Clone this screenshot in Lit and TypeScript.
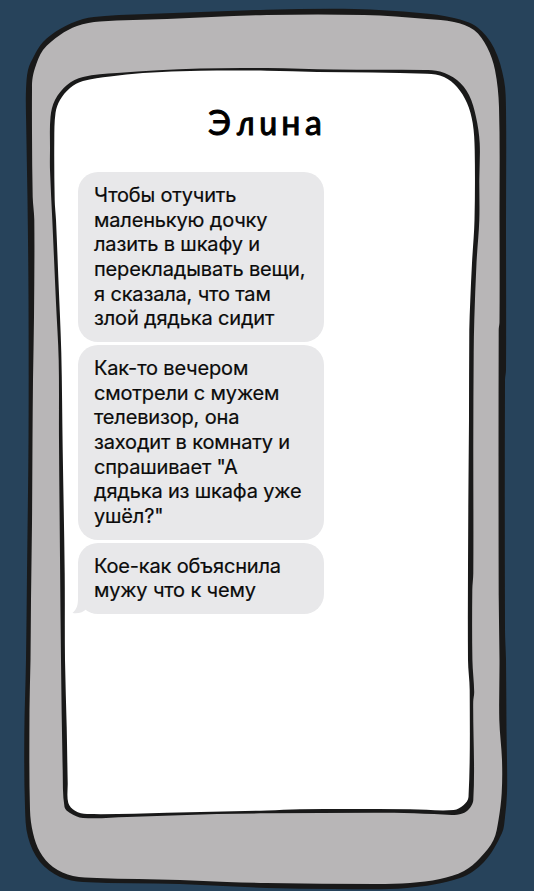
import { LitElement, html, css, svg } from "lit";
import { customElement, property } from "lit/decorators.js";

type Point = [number, number];

/** Turns "x,y x,y …" into points. */
const parse = (s: string): Point[] =>
  s.trim().split(/\s+/).map((p) => p.split(",").map(Number) as Point);

/** Closed smooth curve through the points, as cubic Béziers. */
function smooth(source: string): string {
  const p = parse(source);
  const n = p.length;
  const dist = (a: Point, b: Point) => Math.hypot(a[0] - b[0], a[1] - b[1]) || 1;
  let d = `M${p[0][0]} ${p[0][1]}`;
  const tangent = (i: number): Point => {
    const a = p[(i - 1 + n) % n];
    const b = p[(i + 1) % n];
    const l = dist(a, b);
    return [(b[0] - a[0]) / l, (b[1] - a[1]) / l];
  };
  for (let i = 0; i < n; i++) {
    const a = p[i];
    const b = p[(i + 1) % n];
    const l = dist(a, b) / 3;
    const ta = tangent(i);
    const tb = tangent((i + 1) % n);
    d += `C${(a[0] + ta[0] * l).toFixed(2)} ${(a[1] + ta[1] * l).toFixed(2)} ${(b[0] - tb[0] * l).toFixed(2)} ${(b[1] - tb[1] * l).toFixed(2)} ${b[0]} ${b[1]}`;
  }
  return d + "Z";
}

const CASE_OUTLINE = `26,90 28,70 34,56 43,42 60,29 83,19 105,16 133,14.5 187,12.5 267,9.8 354,9 420,13 454,18 477,27 494,48 504,80
 506,110 506,220 506,370 505,380 505,630 506,660 506.5,730 507,760 507,793 505,817 502,833 484,862 460,878 407,888 334,889 267,888
 223,886 180,884 83,882 60,877 40,862 28,837 25,807 24.3,735 26,660 27,573 28.5,440 28.5,300 27.5,200 26,115`;
const CASE_FILL = `32,90 32.3,80 35,68 43,50 60,35 77,26 100,21.5 167,19 267,15 364,15 427,19 454,22 474,30 487,47 495,70 499,107
 499.5,220 499.5,322 498.7,330 498.7,595 499.5,660 499.3,720 502,760 501.7,793 498.5,820 493.5,840 480,858 464,871 440,879 410,883
 377,884 267,883 227,882 180,880 97,878 73,876 53,867 40,852 33,833 30,810 29.5,710 30.5,660 31,600 32,523 32.5,440 33,380 34,317
 34.3,220 32.7,197 32,133`;
const SCREEN_OUTLINE = `50,150 50.5,117 55,100 67,85 83,77 117,73 200,68.5 267,68 334,69.5 424,70 440,71.5 457,80 469,95 476,117
 479.7,143 479.3,180 479.3,220 476.5,263 474.3,320 473.7,353 473.3,440 473.3,573 472.3,590 472.4,660 474.2,692 473.2,702 473.3,800
 467,811 457,814.7 434,814 394,812.7 267,813.3 217,814 127,817 83,818 70,813 64.5,807 62.7,770 61,660 60,557 59,440 58.7,360
 56,303 52.3,220 50,170`;
const SCREEN_FILL = `54.3,140 55.5,113 60,100 70,88 83,81 110,76.5 143,73 200,70.8 267,70.7 317,72 427,73.7 444,77 457,87 467,103
 472.7,123 474.7,150 474.5,220 472,263 470.3,300 469.3,330 469,420 468.3,507 468,660 469.7,690 468.5,797 463.7,805 453.7,810
 410,809.3 300,809.3 267,810.5 167,812.7 87,814 75,810.7 68.3,803 67.7,783 66.7,727 65,660 64.7,573 62.7,450 61.3,353 58.3,277
 56,220 54.7,200`;

@customElement("phone-frame")
class PhoneFrame extends LitElement {
  static styles = css`
    :host { display: block; width: 100%; height: 100%; }
    .frame { display: block; }
    .ink { fill: #191919; }
    .case { fill: #b8b6b7; }
    .screen { fill: #fff; }
  `;
  render() {
    return html`<svg class="frame" width="534" height="891" viewBox="0 0 534 891" aria-hidden="true">
      ${svg`<path class="ink" d=${smooth(CASE_OUTLINE)}></path>
      <path class="case" d=${smooth(CASE_FILL)}></path>
      <path class="ink" d=${smooth(SCREEN_OUTLINE)}></path>
      <path class="screen" d=${smooth(SCREEN_FILL)}></path>`}
    </svg>`;
  }
}

@customElement("chat-bubble")
class ChatBubble extends LitElement {
  @property({ attribute: false }) lines: string[] = [];
  @property({ type: Boolean }) tail = false;

  static styles = css`
    :host { display: block; position: relative; }
    .bubble {
      box-sizing: border-box;
      width: 246px;
      padding: 11px 15px 11px 16px;
      border-radius: 20px;
      background: #e8e8ea;
      color: #0b0b0b;
      font: 400 20px/24.67px Inter, "Noto Sans", sans-serif;
      letter-spacing: -0.16px;
      -webkit-text-stroke: 0.2px #0b0b0b;
    }
    .line { display: block; white-space: nowrap; }
    .tail { position: absolute; left: -6px; bottom: 0; fill: #e8e8ea; }
  `;
  render() {
    return html`
      ${this.tail
        ? html`<svg class="tail" width="20" height="30" viewBox="0 0 20 30"><path d="M6 0V14C6 21 5 25 0.500 29C6 30 11 28.500 14.500 25L20 22V0Z"></path></svg>`
        : null}
      <div class="bubble">${this.lines.map((l) => html`<span class="line">${l}</span>`)}</div>
    `;
  }
}

@customElement("app-root")
class AppRoot extends LitElement {
  static styles = css`
    :host {
      display: grid;
      width: 534px;
      height: 891px;
      overflow: hidden;
      background: #27435b;
    }
    .backdrop, .content { grid-area: 1 / 1; }
    .backdrop { z-index: 0; }
    .content { z-index: 1; display: flex; flex-direction: column; padding: 99px 0 0 78px; }
    .title {
      margin: 0 0 0 130px;
      height: 73px;
      color: #000;
      font: 400 34px/46px Lato, sans-serif;
      letter-spacing: 4.6px;
      white-space: nowrap;
      -webkit-text-stroke: 1px #000;
    }
    .cursive { display: inline-block; font-style: italic; transform: skewX(7deg); }
    .messages { display: flex; flex-direction: column; gap: 3px; }
  `;
  render() {
    return html`
      <phone-frame class="backdrop"></phone-frame>
      <main class="content">
        <h1 class="title">Э<span class="cursive">ли</span>на</h1>
        <div class="messages">
          <chat-bubble .lines=${["Чтобы отучить", "маленькую дочку", "лазить в шкафу и", "перекладывать вещи,", "я сказала, что там", "злой дядька сидит"]}></chat-bubble>
          <chat-bubble .lines=${["Как-то вечером", "смотрели с мужем", "телевизор, она", "заходит в комнату и", "спрашивает \"А", "дядька из шкафа уже", "ушёл?\""]}></chat-bubble>
          <chat-bubble tail .lines=${["Кое-как объяснила", "мужу что к чему"]}></chat-bubble>
        </div>
      </main>
    `;
  }
}
